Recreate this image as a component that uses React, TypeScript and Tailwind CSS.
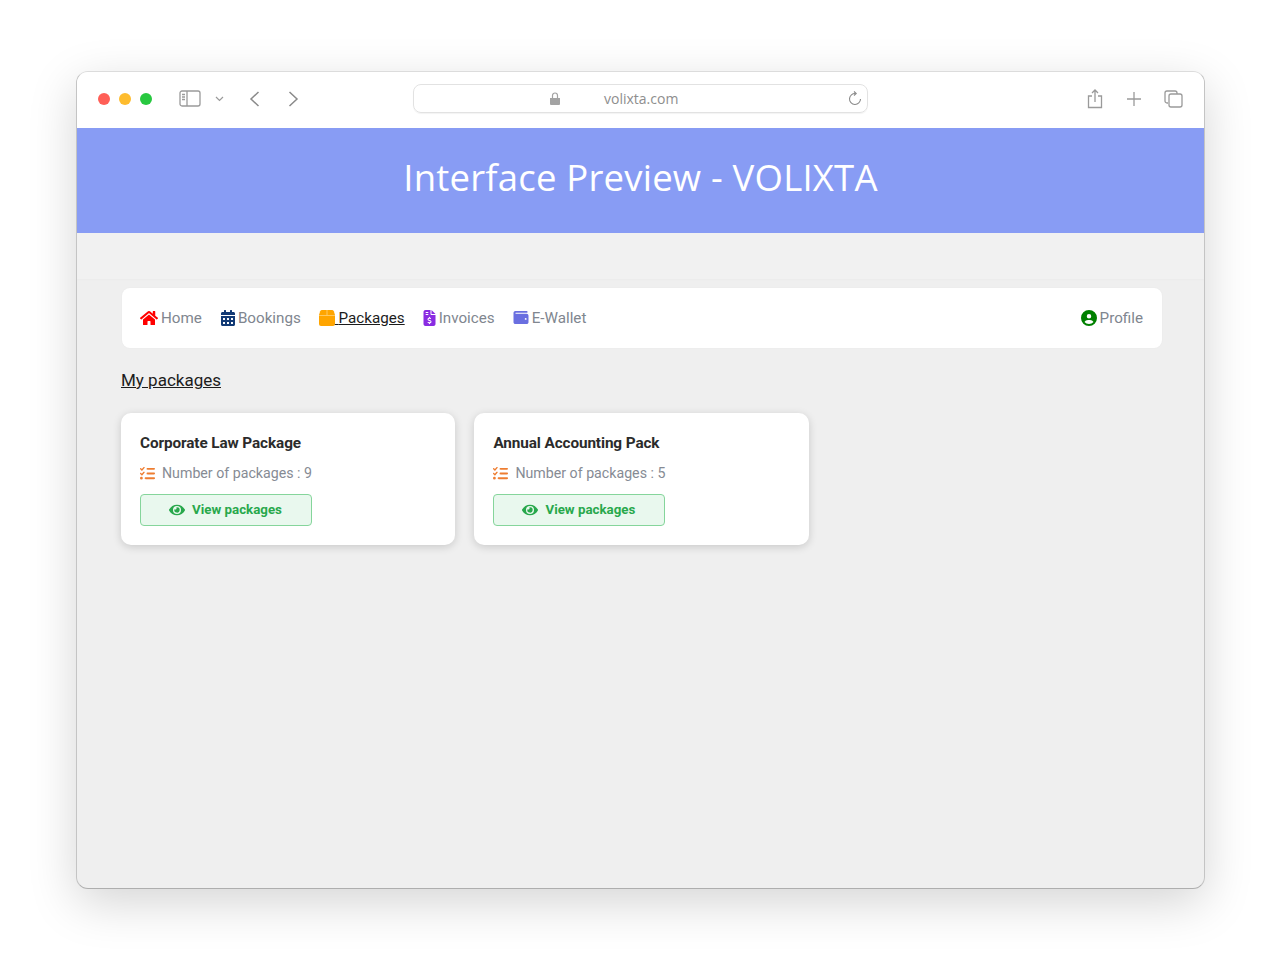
import React from 'react';
import { FaHome, FaCalendarAlt, FaEye } from 'react-icons/fa';
import { FaFileInvoiceDollar, FaWallet, FaCircleUser, FaListCheck } from 'react-icons/fa6';

const packages = [
  { title: 'Corporate Law Package', count: 9 },
  { title: 'Annual Accounting Pack', count: 5 },
];

const PackageCard = ({ title, count }: { title: string; count: number }) => (
  <div className="w-[334.4px] h-[132px] bg-white rounded-[10px] shadow-[0_2px_8px_rgba(0,0,0,0.16)] px-[19px] pt-[20px]">
    <div className="text-[15.3px] leading-[20px] font-bold text-[#2b2b2b] tracking-[-0.1px]">{title}</div>
    <div className="flex items-center mt-[11px] h-[19px] text-[14.2px] text-[#868b94]">
      <FaListCheck className="w-[15px] h-[15px] text-[#ee7d31] mr-[7px]" />
      <span>Number of packages : {count}</span>
    </div>
    <button className="mt-[11px] w-[172px] h-[32px] pr-[1px] flex items-center justify-center gap-[7px] rounded-[4px] border-[1.5px] border-[#85d59b] bg-[#e9f8ee] text-[#28a84c] text-[13.3px] font-bold">
      <FaEye className="w-[16px] h-[16px]" />
      View packages
    </button>
  </div>
);

const NavLink = ({ icon, label, active }: { icon: React.ReactNode; label: string; active?: boolean }) => (
  <a className={`flex items-center text-[15.2px] ${active ? 'text-[#1c1c1c] underline' : 'text-[#80868f]'}`}>
    {icon}
    <span className={active ? '' : 'ml-[3px]'}>{active ? '\u00a0' : ''}{label}</span>
  </a>
);

// the package icon: a filled carton with a seam on the lid
const BoxIcon = () => (
  <svg width="16" height="16" viewBox="0 0 16 16">
    <path d="M3 0h10a2 2 0 0 1 1.800 1.200L16 5v9a2 2 0 0 1-2 2H2a2 2 0 0 1-2-2V5l1.200-3.800A2 2 0 0 1 3 0z" fill="#ffa500" />
    <path d="M0 5.500h16M8 0v5.500" stroke="#ffd27a" strokeWidth="0.8" fill="none" />
  </svg>
);

export default function App() {
  return (
    <div className="h-[959px] bg-white pl-[76px] pt-[71px] overflow-hidden font-['Roboto',sans-serif]">
      <div className="w-[1129px] h-[818px] rounded-[12px] overflow-hidden bg-[#efefef] border border-t-[#dcdcdc] border-x-[#c4c4c4] border-b-[#aeaeae] shadow-[0_14px_48px_rgba(0,0,0,0.17)] flex flex-col">
        {/* browser toolbar */}
        <div className="h-[56px] shrink-0 bg-white flex items-center pb-[3px]">
          <div className="flex gap-[9px] ml-[21px]">
            <span className="w-[12px] h-[12px] rounded-full bg-[#ff5f57]" />
            <span className="w-[12px] h-[12px] rounded-full bg-[#febc2e]" />
            <span className="w-[12px] h-[12px] rounded-full bg-[#28c840]" />
          </div>
          <svg className="ml-[27px]" width="22" height="17" viewBox="0 0 22 17" fill="none" stroke="#9a9a9a" strokeWidth="1.3">
            <rect x="1" y="1" width="20" height="15" rx="2" />
            <path d="M8 1v15" />
            <path d="M3 4.500h3M3 7h3M3 9.500h3" />
          </svg>
          <svg className="ml-[14px]" width="9" height="6" viewBox="0 0 9 6" fill="none" stroke="#9a9a9a" strokeWidth="1.2">
            <path d="M1 1l3.500 3.500L8 1" />
          </svg>
          <svg className="ml-[25px]" width="11" height="16" viewBox="0 0 11 16" fill="none" stroke="#8a8a8a" strokeWidth="1.5">
            <path d="M9.500 1L2 8l7.500 7" />
          </svg>
          <svg className="ml-[28px]" width="11" height="16" viewBox="0 0 11 16" fill="none" stroke="#8a8a8a" strokeWidth="1.5">
            <path d="M1.500 1L9 8l-7.500 7" />
          </svg>
          <div className="ml-[114px] w-[455px] h-[29px] rounded-[8px] border border-[#e2e2e2] shadow-[0_1px_1px_rgba(0,0,0,0.05)] flex items-center">
            <svg className="ml-[136px]" width="10" height="13" viewBox="0 0 10 13" fill="#a3a3a3">
              <path d="M0 6h10v6a1 1 0 0 1-1 1H1a1 1 0 0 1-1-1z" />
              <path d="M2.500 6V3.500a2.500 2.500 0 0 1 5 0V6" fill="none" stroke="#a3a3a3" strokeWidth="1.2" />
            </svg>
            <span className="ml-[44px] text-[14px] text-[#8e8e8e] font-['Open_Sans',sans-serif]">volixta.com</span>
            <svg className="ml-auto mr-[5px]" width="14" height="15" viewBox="0 0 14 15" fill="none" stroke="#8a8a8a" strokeWidth="1.1">
              <path d="M7.500 2.500A5.500 5.500 0 1 0 12.500 8" />
              <path d="M6 0.500l2.200 2-2.200 2" />
            </svg>
          </div>
          <svg className="ml-[219px]" width="16" height="20" viewBox="0 0 16 20" fill="none" stroke="#9a9a9a" strokeWidth="1.3">
            <path d="M5 7H1.500v11.500h13V7H11" />
            <path d="M8 13V1.500M5 4l3-3 3 3" />
          </svg>
          <svg className="ml-[23px]" width="16" height="16" viewBox="0 0 16 16" fill="none" stroke="#9a9a9a" strokeWidth="1.3">
            <path d="M8 1v14M1 8h14" />
          </svg>
          <svg className="ml-[22px]" width="19" height="18" viewBox="0 0 19 18" fill="none" stroke="#9a9a9a" strokeWidth="1.3">
            <path d="M4 13H3a2 2 0 0 1-2-2V3a2 2 0 0 1 2-2h8a2 2 0 0 1 2 2v1" />
            <rect x="5" y="4" width="13" height="13" rx="2" />
          </svg>
        </div>

        {/* banner */}
        <div className="h-[105px] shrink-0 bg-[#889cf4] flex items-center justify-center pb-[7px]">
          <h1 className="text-[36.5px] text-white font-['Open_Sans',sans-serif] tracking-[0.2px]">Interface Preview - VOLIXTA</h1>
        </div>

        {/* page */}
        <div className="h-[46px] shrink-0 bg-[#f1f1f1] shadow-[0_1px_2px_rgba(0,0,0,0.02)]" />
        <div className="flex-1 pl-[44px] pt-[9px]">
          <nav className="ml-[1px] w-[1040px] h-[60px] bg-white rounded-[8px] flex items-center gap-[18px] pl-[18px] pr-[19px] shadow-[0_0_2px_rgba(0,0,0,0.04)]">
            <div className="mr-[1px]">
              <NavLink icon={<FaHome className="w-[18px] h-[16px] text-[#ff0000]" />} label="Home" />
            </div>
            <NavLink icon={<FaCalendarAlt className="w-[14px] h-[16px] text-[#123a75]" />} label="Bookings" />
            <NavLink active icon={<BoxIcon />} label="Packages" />
            <NavLink icon={<FaFileInvoiceDollar className="w-[13px] h-[16px] text-[#8a2be2]" />} label="Invoices" />
            <NavLink icon={<FaWallet className="w-[16px] h-[15px] text-[#6a6fe0]" />} label="E-Wallet" />
            <div className="ml-auto">
              <NavLink icon={<FaCircleUser className="w-[16px] h-[16px] text-[#008000]" />} label="Profile" />
            </div>
          </nav>
          <h2 className="mt-[21px] text-[17px] leading-[22px] text-[#1c1c1c] underline">My packages</h2>
          <div className="flex gap-[19px] mt-[22px]">
            {packages.map((p) => (
              <PackageCard key={p.title} title={p.title} count={p.count} />
            ))}
          </div>
        </div>
      </div>
    </div>
  );
}
